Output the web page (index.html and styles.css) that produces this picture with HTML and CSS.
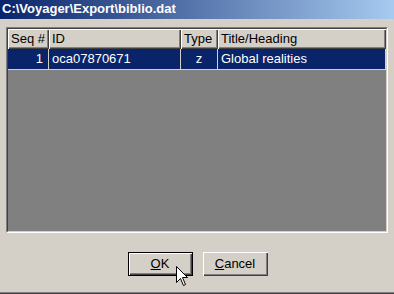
FILE: index.html
```
<!doctype html>
<html>
<head>
	<meta charset="utf-8" />
	<title>biblio.dat</title>
	<link rel="stylesheet" href="styles.css">
</head>
<body>
<div class="window">
	<div class="titlebar">C:\Voyager\Export\biblio.dat</div>

	<div class="content">
		<div class="listview">
			<div class="grid">
				<div class="hd">Seq #</div>
				<div class="hd">ID</div>
				<div class="hd">Type</div>
				<div class="hd">Title/Heading</div>

				<div class="cell sel num">1</div>
				<div class="cell sel">oca07870671</div>
				<div class="cell sel mid">z</div>
				<div class="cell sel">Global realities</div>
			</div>
		</div>

		<div class="buttons">
			<div class="btn default"><span><u>O</u>K</span></div>
			<div class="btn"><span><u>C</u>ancel</span></div>
		</div>
	</div>

	<svg class="cursor" width="13" height="21" viewBox="0 0 13 21">
		<path d="M0.5 0.5 L0.5 16.5 L4.5 12.5 L7.5 19.5 L9.5 18.5 L6.5 11.5 L11.5 11.5 Z" fill="#fff" stroke="#000" stroke-width="1" />
	</svg>
</div>
</body>
</html>
```

FILE: styles.css
```
body {
	margin: 0;
	background: #d4d0c8;
	font-family: "Liberation Sans", Arial, sans-serif;
	font-size: 13px;
}

.window {
	position: relative;
	width: 394px;
	height: 294px;
	display: flex;
	flex-direction: column;
	background: #d4d0c8;
	overflow: hidden;
}

.titlebar {
	height: 19px;
	line-height: 18px;
	padding-left: 2px;
	color: #fff;
	font-weight: bold;
	font-size: 13px;
	background: linear-gradient(to right, #0a246a, #a6caf0);
}

.content {
	flex: 1;
	display: flex;
	flex-direction: column;
	padding: 8px 6px 0 6px;
	border-bottom: 1px solid #404040;
	box-shadow: inset 0 -1px #808080;
}

.listview {
	height: 206px;
	box-sizing: border-box;
	border: 1px solid;
	border-color: #808080 #fff #fff #808080;
	background: #808080;
}

.grid {
	height: 100%;
	box-sizing: border-box;
	border: 1px solid;
	border-color: #404040 #d4d0c8 #d4d0c8 #404040;
	display: grid;
	grid-template-columns: 41px 132px 37px 168px;
	grid-template-rows: 20px 21px;
	align-content: start;
}

.hd {
	background: #d4d0c8;
	color: #000;
	line-height: 20px;
	padding-left: 3px;
	box-shadow: inset 1px 1px #fff, inset -1px -1px #404040, inset -2px -2px #808080;
}

.cell {
	background: #0a246a;
	color: #fff;
	line-height: 20px;
	padding-left: 3px;
	border-right: 1px solid #d4d0c8;
	border-bottom: 1px solid #d4d0c8;
}

.cell.num {
	text-align: right;
	padding-right: 5px;
	padding-left: 0;
}

.cell.mid {
	text-align: center;
	padding-left: 0;
}

.buttons {
	display: flex;
	justify-content: center;
	gap: 10px;
	margin-top: 19px;
	padding-left: 1px;
}

.btn {
	width: 65px;
	height: 24px;
	box-sizing: border-box;
	display: flex;
	align-items: center;
	justify-content: center;
	background: #d4d0c8;
	box-shadow: inset 1px 1px #fff, inset -1px -1px #404040, inset -2px -2px #808080;
}

.btn.default {
	border: 1px solid #000;
}

.btn span {
	padding-bottom: 1px;
}

.cursor {
	position: absolute;
	left: 176px;
	top: 266px;
}
```
